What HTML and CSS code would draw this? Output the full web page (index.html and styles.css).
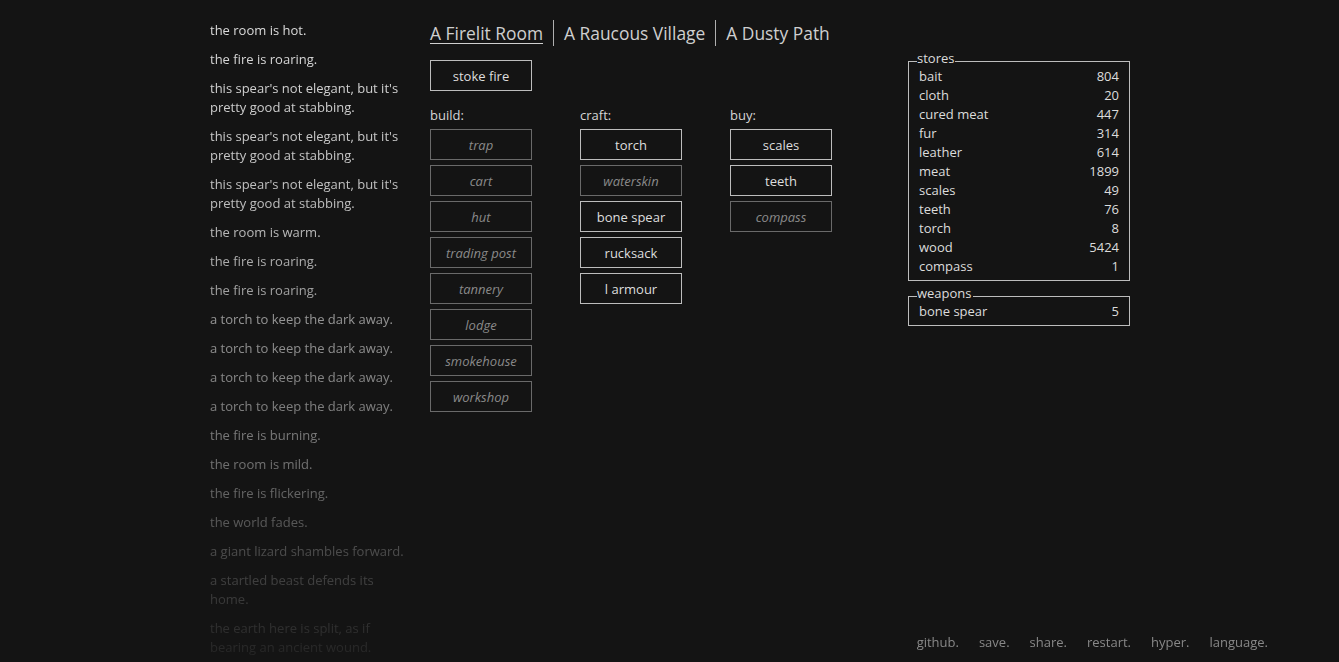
FILE: index.html
```html
<!DOCTYPE html>
<html>
<head>
<meta charset="utf-8">
<link rel="stylesheet" href="styles.css">
</head>
<body>
<div class="page">
  <div class="notifications">
    <div class="notification">the room is hot.</div>
    <div class="notification">the fire is roaring.</div>
    <div class="notification">this spear's not elegant, but it's<br>pretty good at stabbing.</div>
    <div class="notification">this spear's not elegant, but it's<br>pretty good at stabbing.</div>
    <div class="notification">this spear's not elegant, but it's<br>pretty good at stabbing.</div>
    <div class="notification">the room is warm.</div>
    <div class="notification">the fire is roaring.</div>
    <div class="notification">the fire is roaring.</div>
    <div class="notification">a torch to keep the dark away.</div>
    <div class="notification">a torch to keep the dark away.</div>
    <div class="notification">a torch to keep the dark away.</div>
    <div class="notification">a torch to keep the dark away.</div>
    <div class="notification">the fire is burning.</div>
    <div class="notification">the room is mild.</div>
    <div class="notification">the fire is flickering.</div>
    <div class="notification">the world fades.</div>
    <div class="notification">a giant lizard shambles forward.</div>
    <div class="notification">a startled beast defends its<br>home.</div>
    <div class="notification">the earth here is split, as if<br>bearing an ancient wound.</div>
  </div>
  <div class="main">
    <div class="header">
      <span class="tab selected">A Firelit Room</span>
      <span class="tab">A Raucous Village</span>
      <span class="tab">A Dusty Path</span>
    </div>
    <div class="btn stoke">stoke fire</div>
    <div class="columns">
      <div class="col">
        <div class="label">build:</div>
        <div class="btn disabled">trap</div>
        <div class="btn disabled">cart</div>
        <div class="btn disabled">hut</div>
        <div class="btn disabled">trading post</div>
        <div class="btn disabled">tannery</div>
        <div class="btn disabled">lodge</div>
        <div class="btn disabled">smokehouse</div>
        <div class="btn disabled">workshop</div>
      </div>
      <div class="col">
        <div class="label">craft:</div>
        <div class="btn">torch</div>
        <div class="btn disabled">waterskin</div>
        <div class="btn">bone spear</div>
        <div class="btn">rucksack</div>
        <div class="btn">l armour</div>
      </div>
      <div class="col">
        <div class="label">buy:</div>
        <div class="btn">scales</div>
        <div class="btn">teeth</div>
        <div class="btn disabled">compass</div>
      </div>
    </div>
  </div>
  <div class="side">
    <div class="box stores">
      <div class="legend">stores</div>
      <div class="row"><span>bait</span><span>804</span></div>
      <div class="row"><span>cloth</span><span>20</span></div>
      <div class="row"><span>cured meat</span><span>447</span></div>
      <div class="row"><span>fur</span><span>314</span></div>
      <div class="row"><span>leather</span><span>614</span></div>
      <div class="row"><span>meat</span><span>1899</span></div>
      <div class="row"><span>scales</span><span>49</span></div>
      <div class="row"><span>teeth</span><span>76</span></div>
      <div class="row"><span>torch</span><span>8</span></div>
      <div class="row"><span>wood</span><span>5424</span></div>
      <div class="row"><span>compass</span><span>1</span></div>
    </div>
    <div class="box weapons">
      <div class="legend">weapons</div>
      <div class="row"><span>bone spear</span><span>5</span></div>
    </div>
  </div>
</div>
<div class="menu">
  <span>github.</span>
  <span>save.</span>
  <span>share.</span>
  <span>restart.</span>
  <span>hyper.</span>
  <span>language.</span>
</div>
</body>
</html>
```
FILE: styles.css
```css
html, body {
  margin: 0;
  height: 662px;
  overflow: hidden;
  background: #141414;
}
body {
  color: #dcdcdc;
  font-family: "Open Sans", "Noto Sans", sans-serif;
  font-size: 13px;
  line-height: 19px;
}
.page {
  display: flex;
  align-items: flex-start;
  padding-left: 210px;
  padding-top: 20px;
}
.notifications {
  width: 200px;
  margin-right: 20px;
  padding-top: 1px;
  white-space: nowrap;
  -webkit-mask-image: linear-gradient(to bottom, #000 0px, rgba(0,0,0,.82) 212px, rgba(0,0,0,.64) 300px, rgba(0,0,0,.46) 444px, rgba(0,0,0,.34) 502px, rgba(0,0,0,.22) 560px, rgba(0,0,0,.08) 640px);
  mask-image: linear-gradient(to bottom, #000 0px, rgba(0,0,0,.82) 212px, rgba(0,0,0,.64) 300px, rgba(0,0,0,.46) 444px, rgba(0,0,0,.34) 502px, rgba(0,0,0,.22) 560px, rgba(0,0,0,.08) 640px);
}
.notification {
  margin-bottom: 10px;
}
.main {
  width: 478px;
}
.header {
  display: flex;
  font-size: 17.4px;
  line-height: 26px;
  color: #cfcfcf;
}
.tab {
  padding: 0 10px;
  border-left: 1px solid #b0b0b0;
}
.tab:first-child {
  padding-left: 0;
  border-left: none;
}
.tab.selected {
  text-decoration: underline;
  text-underline-offset: 3px;
  text-decoration-thickness: 1px;
}
.btn {
  width: 100px;
  height: 28px;
  padding-top: 1px;
  line-height: 29px;
  border: 1px solid #bdbdbd;
  text-align: center;
  margin-bottom: 5px;
  color: #dedede;
}
.btn.disabled {
  border-color: #6a6a6a;
  color: #8a8a8a;
  font-style: italic;
}
.stoke {
  margin-top: 14px;
}
.columns {
  display: flex;
  margin-top: 15px;
}
.col {
  width: 150px;
}
.label {
  margin-bottom: 4px;
  color: #d6d6d6;
}
.side {
  width: 222px;
  padding-top: 41px;
}
.box {
  position: relative;
  border: 1px solid #bdbdbd;
  padding: 5px 10px 4px;
  margin-bottom: 15px;
}
.weapons {
  padding: 5px 10px 4px;
}
.legend {
  position: absolute;
  top: -11px;
  left: 8px;
  line-height: 15px;
  background: #141414;
  padding: 0 1px 0 0;
}
.row {
  display: flex;
  justify-content: space-between;
}
.menu {
  position: fixed;
  right: 71px;
  bottom: 10px;
  display: flex;
  gap: 20px;
  color: #888;
}
```
